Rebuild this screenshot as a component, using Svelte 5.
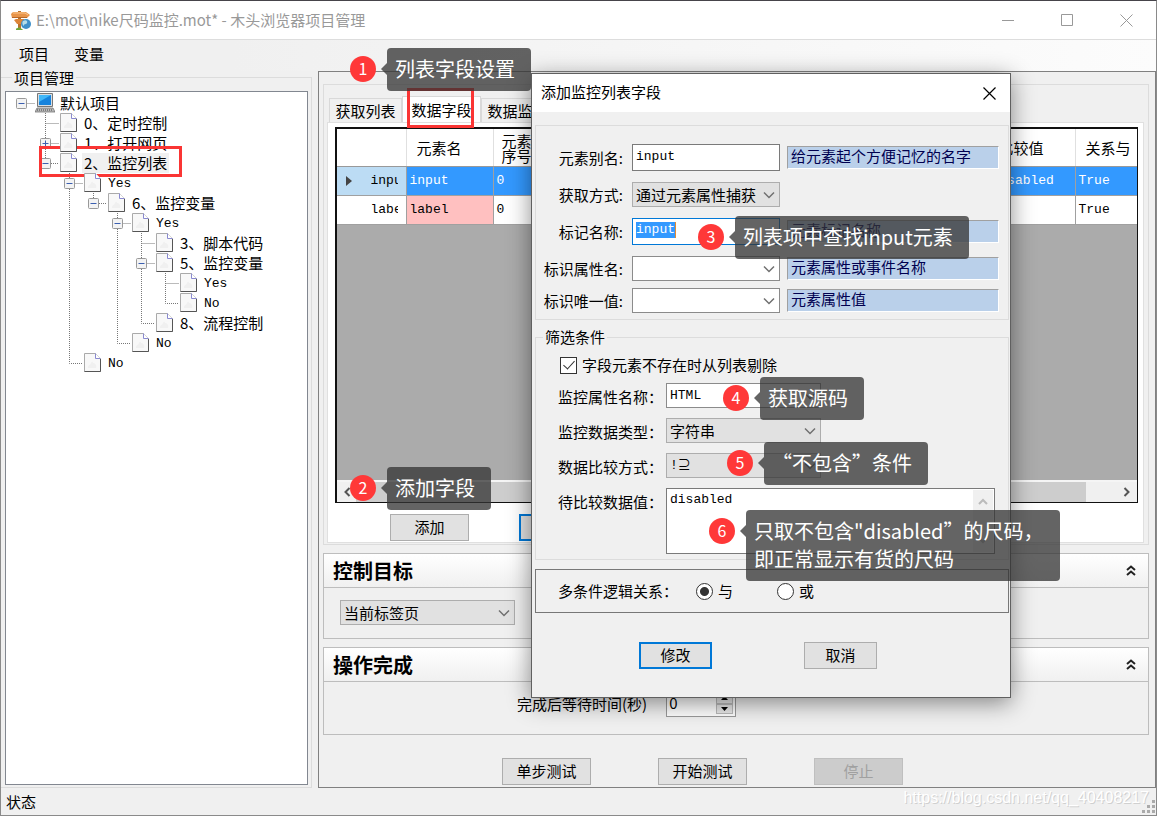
<script>
    // Guide cells: "" blank, "v" line, "t" branch, "l" last branch, "r" root
    const tree = [
        { text: "默认项目", guides: ["r"], toggle: "-", root: true },
        { text: "0、定时控制", guides: ["", "t"] },
        { text: "1、打开网页", guides: ["", "t"], toggle: "+" },
        { text: "2、监控列表", guides: ["", "l"], toggle: "-", selected: true },
        { text: "Yes", guides: ["", "", "t"], toggle: "-" },
        { text: "6、监控变量", guides: ["", "", "v", "l"], toggle: "-" },
        { text: "Yes", guides: ["", "", "v", "", "t"], toggle: "-" },
        { text: "3、脚本代码", guides: ["", "", "v", "", "v", "t"] },
        { text: "5、监控变量", guides: ["", "", "v", "", "v", "t"], toggle: "-" },
        { text: "Yes", guides: ["", "", "v", "", "v", "v", "t"] },
        { text: "No", guides: ["", "", "v", "", "v", "v", "l"] },
        { text: "8、流程控制", guides: ["", "", "v", "", "v", "l"] },
        { text: "No", guides: ["", "", "v", "", "l"] },
        { text: "No", guides: ["", "", "l"] },
    ];

    const guidePaths = {
        v: "M12.5 0V20",
        t: "M12.5 0V20M12.5 10.5H26",
        l: "M12.5 0V10.5H26",
        r: "M12.5 10.5H26",
    };

    const tabs = ["获取列表", "数据字段", "数据监控"];
    let activeTab = $state(1);

    const notes = [
        { id: 1, x: 350, y: 48, lines: ["列表字段设置"] },
        { id: 2, x: 350, y: 467, lines: ["添加字段"] },
        { id: 3, x: 698, y: 216, lines: ["列表项中查找input元素"] },
        { id: 4, x: 723, y: 377, lines: ["获取源码"] },
        { id: 5, x: 727, y: 442, lines: ["“不包含”条件"] },
        { id: 6, x: 709, y: 510, lines: ['只取不包含"disabled”的尺码，', "即正常显示有货的尺码"] },
    ];

    let alias = $state("input");
    let tagName = $state("input");
    let removeMissing = $state(true);
    let compareValue = $state("disabled");
    let logic = $state("and");
    let waitSeconds = $state("0");
</script>

{#snippet combo(id, value, kind)}
    <span class="combo {kind}">
        <select {id} aria-label={id}>
            <option>{value}</option>
        </select>
        <svg width="12" height="8" viewBox="0 0 12 8"><path d="M1 1.5l5 5 5-5" fill="none" stroke="#707070" stroke-width="1.5" /></svg>
    </span>
{/snippet}

{#snippet collapseIcon()}
    <svg width="10" height="11" viewBox="0 0 10 11"><path d="M1 5l4-3.5L9 5M1 10l4-3.5L9 10" fill="none" stroke="#222" stroke-width="2" /></svg>
{/snippet}

<div class="window">
    <header class="titlebar">
        <svg class="logo" width="20" height="21" viewBox="0 0 20 21">
            <path d="M7 1h3v18H7z" fill="#b8722b" />
            <path d="M0 4l2-2h13l4 3-3 3H1z" fill="#e8954a" />
            <path d="M2 3h12l3 2" fill="none" stroke="#fbc68d" />
            <path d="M1 7.500h15" stroke="#b5682a" />
            <path d="M3 10l2-1h8v5H6z" fill="#dd8438" />
            <path d="M5 20c0-3 2-1 3-3 1 2 3 1 4 3z" fill="#6fa537" />
            <circle cx="15" cy="14" r="5" fill="#3e8fc9" />
            <path d="M12 11c3-2 5 0 4 2s-3 0-3 3c-2-1-2-4-1-5z" fill="#b5dce9" />
        </svg>
        <h1>E:\mot\nike尺码监控.mot* - 木头浏览器项目管理</h1>
        <div class="window-buttons">
            <button aria-label="最小化"><svg width="13" height="13"><path d="M0 6.500H12" stroke="#999" /></svg></button>
            <button aria-label="最大化"><svg width="13" height="13"><path d="M.5 .5h11v11H.5z" fill="none" stroke="#999" /></svg></button>
            <button aria-label="关闭"><svg width="13" height="13"><path d="M.5 .5l12 12M12.500 .5l-12 12" stroke="#999" /></svg></button>
        </div>
    </header>

    <nav class="menubar">
        <button>项目</button>
        <button>变量</button>
    </nav>

    <main class="workspace">
        <fieldset class="project-box">
            <legend>项目管理</legend>
            <div class="tree">
                {#each tree as node}
                    <div class="node">
                        {#each node.guides as guide, i}
                            <svg class="guide" width="24" height="20" viewBox="0 0 24 20">
                                {#if guide}
                                    <path d={guidePaths[guide]} fill="none" stroke="#777" stroke-dasharray="1 1" />
                                {/if}
                                {#if node.toggle && i === node.guides.length - 1}
                                    <rect x="7.5" y="5.5" width="10" height="10" rx="1" fill="#f3f3f3" stroke="#999" />
                                    <path d={node.toggle === "+" ? "M9.500 10.500h6M12.500 7.500v6" : "M9.500 10.500h6"} stroke="#3b5fb0" />
                                {/if}
                            </svg>
                        {/each}
                        {#if node.root}
                            <svg class="pc" width="20" height="20" viewBox="0 0 20 20">
                                <path d="M2.500 .5h15v13h-15z" fill="#d8dde2" stroke="#777" />
                                <path d="M4 2h12v10H4z" fill="#1683dd" />
                                <path d="M4 2h12L4 9z" fill="#41b7f8" />
                                <path d="M2 15h16l2 4H0z" fill="#bbb" stroke="#666" stroke-width=".7" />
                                <path d="M2 17h16" stroke="#444" stroke-dasharray="1 1" />
                            </svg>
                        {:else}
                            <svg class="page" width="18" height="20" viewBox="0 0 18 20">
                                <path d="M.5 .5h11l5 5v13H.5z" fill="#f8f8f8" stroke="#aaa" />
                                <path d="M.5 18.500h16V6" fill="none" stroke="#555" />
                                <path d="M11.500 .5v5h5" fill="#fff" stroke="#8a8ad0" />
                                <path d="M4 15c0-4 2-2 3-5 1-2 2-1 2 0 2 0 4 2 3 5z" fill="#f0f0f0" />
                            </svg>
                        {/if}
                        <span class="node-text" class:latin={/^[A-Z]/.test(node.text)} class:selected={node.selected}>{node.text}</span>
                    </div>
                {/each}
            </div>
        </fieldset>

        <section class="detail">
            <div class="tab-group">
                <div class="tabs" role="tablist">
                    {#each tabs as tab, i}
                        <button role="tab" aria-selected={activeTab === i} class:active={activeTab === i} onclick={() => (activeTab = i)}>{tab}</button>
                    {/each}
                </div>
                <div class="tab-page">
                    <div class="grid">
                        <div class="grid-body">
                            <table>
                                <colgroup>
                                    <col class="c-head" /><col class="c-mid" /><col /><col class="c-mid" /><col class="c-last" />
                                </colgroup>
                                <thead>
                                    <tr><th></th><th>元素名</th><th class="two">元素<br />序号</th><th>比较值</th><th>关系与</th></tr>
                                </thead>
                                <tbody>
                                    <tr class="current">
                                        <td><div class="row-head"><svg width="8" height="12"><path d="M1 1l6 5-6 5z" fill="#444" /></svg><span>input</span></div></td>
                                        <td>input</td><td>0</td><td>disabled</td><td>True</td>
                                    </tr>
                                    <tr>
                                        <td><div class="row-head"><span>label</span></div></td>
                                        <td class="pink">label</td><td>0</td><td></td><td>True</td>
                                    </tr>
                                </tbody>
                            </table>
                        </div>
                        <div class="scrollbar">
                            <svg width="8" height="10"><path d="M6.500 1l-4 4 4 4" fill="none" stroke="#555" stroke-width="2" /></svg>
                            <div class="thumb"></div>
                            <svg width="8" height="10"><path d="M1.500 1l4 4-4 4" fill="none" stroke="#555" stroke-width="2" /></svg>
                        </div>
                    </div>
                    <div class="grid-actions">
                        <button class="btn">添加</button>
                        <button class="btn primary">修改</button>
                    </div>
                </div>
            </div>

            <section class="panel">
                <h2>控制目标 {@render collapseIcon()}</h2>
                <div class="panel-body target">{@render combo("target", "当前标签页", "flat")}</div>
            </section>

            <section class="panel">
                <h2>操作完成 {@render collapseIcon()}</h2>
                <div class="panel-body wait">
                    <label for="wait">完成后等待时间(秒)</label>
                    <div class="spinner">
                        <input id="wait" type="text" bind:value={waitSeconds} />
                        <div class="spin-buttons">
                            <button aria-label="增加"><svg width="7" height="4"><path d="M0 4h7L3.500 0z" /></svg></button>
                            <button aria-label="减少"><svg width="7" height="4"><path d="M0 0h7L3.500 4z" /></svg></button>
                        </div>
                    </div>
                </div>
            </section>

            <div class="test-actions">
                <button class="btn">单步测试</button>
                <button class="btn">开始测试</button>
                <button class="btn" disabled>停止</button>
            </div>
        </section>
    </main>

    <footer class="status">
        <span>状态</span>
        <span class="watermark">https://blog.csdn.net/qq_40408217</span>
        <svg class="grip" width="13" height="13" fill="#aaa">
            <path d="M10 0h3v3h-3zM5 5h3v3H5zM10 5h3v3h-3zM0 10h3v3H0zM5 10h3v3H5zM10 10h3v3h-3z" />
        </svg>
    </footer>

    <div class="dialog" role="dialog" aria-labelledby="dialog-title">
        <header>
            <h2 id="dialog-title">添加监控列表字段</h2>
            <button aria-label="关闭"><svg width="13" height="13"><path d="M.5 .5l12 12M12.500 .5l-12 12" stroke="#000" stroke-width="1.2" /></svg></button>
        </header>

        <div class="box element-box">
            <div class="field">
                <label for="alias">元素别名:</label>
                <input id="alias" class="text" type="text" bind:value={alias} />
                <span class="hint">给元素起个方便记忆的名字</span>
            </div>
            <div class="field">
                <label for="method">获取方式:</label>
                {@render combo("method", "通过元素属性捕获", "flat")}
            </div>
            <div class="field">
                <label for="tag">标记名称:</label>
                <div class="text focused">
                    <input id="tag" type="text" size="5" bind:value={tagName} />
                </div>
                <span class="hint">元素标记名称</span>
            </div>
            <div class="field tight">
                <label for="attr">标识属性名:</label>
                {@render combo("attr", "", "")}
                <span class="hint">元素属性或事件名称</span>
            </div>
            <div class="field">
                <label for="unique">标识唯一值:</label>
                {@render combo("unique", "", "")}
                <span class="hint">元素属性值</span>
            </div>
        </div>

        <fieldset class="box filter-box">
            <legend>筛选条件</legend>
            <label class="check"><input type="checkbox" bind:checked={removeMissing} />字段元素不存在时从列表剔除</label>
            <div class="filter">
                <label for="watch-attr">监控属性名称：</label>
                {@render combo("watch-attr", "HTML", "latin")}
            </div>
            <div class="filter">
                <label for="watch-type">监控数据类型：</label>
                {@render combo("watch-type", "字符串", "flat")}
            </div>
            <div class="filter">
                <label for="compare">数据比较方式：</label>
                {@render combo("compare", "!⊇", "flat latin")}
            </div>
            <div class="filter">
                <label for="value">待比较数据值：</label>
                <div class="area">
                    <textarea id="value" bind:value={compareValue}></textarea>
                    <div class="area-scroll">
                        <svg width="10" height="7"><path d="M1 6l4-4 4 4" fill="none" stroke="#bbb" stroke-width="2" /></svg>
                        <svg width="10" height="7"><path d="M1 1l4 4 4-4" fill="none" stroke="#bbb" stroke-width="2" /></svg>
                    </div>
                </div>
            </div>
        </fieldset>

        <div class="box logic-box">
            <span>多条件逻辑关系：</span>
            <label><input type="radio" name="logic" value="and" bind:group={logic} />与</label>
            <label><input type="radio" name="logic" value="or" bind:group={logic} />或</label>
        </div>

        <div class="dialog-actions">
            <button class="btn primary">修改</button>
            <button class="btn">取消</button>
        </div>
    </div>

    <div class="marker marker-node"></div>
    <div class="marker marker-tab"></div>
    {#each notes as note}
        <div class="note" style="left: {note.x}px; top: {note.y}px">
            <span class="number">{note.id}</span>
            <p>
                {#each note.lines as line}
                    <span>{line}</span>
                {/each}
            </p>
        </div>
    {/each}
</div>

<style>
    :global(body) {
        margin: 0;
    }

    .window {
        position: relative;
        display: flex;
        flex-direction: column;
        min-height: 100vh;
        box-sizing: border-box;
        border: 1px solid #8a8a8a;
        border-top-color: #46444a;
        background: #f0f0f0;
        color: #000;
        font-family: "Noto Sans CJK SC", sans-serif;
        font-size: 15px;
        line-height: 20px;
    }

    .window :is(button, input, select, textarea) {
        box-sizing: border-box;
        margin: 0;
        padding: 0;
        border: 0;
        border-radius: 0;
        background: none;
        color: inherit;
        font: inherit;
        outline: none;
    }

    h1, h2, p {
        margin: 0;
        font-weight: normal;
    }

    svg {
        flex: none;
    }

    .latin,
    td,
    .window .text,
    .window textarea {
        font-family: "Liberation Mono", "Noto Sans CJK SC", monospace;
        font-size: 13px;
    }

    /* Title bar and menu */
    .titlebar {
        display: flex;
        align-items: center;
        height: 38px;
        padding-left: 10px;
        background: #fff;
        border-bottom: 1px solid #ddd;
        color: #999;
    }

    .titlebar h1 {
        flex: 1;
        margin-left: 5px;
        font-size: 15px;
    }

    .window-buttons {
        display: flex;
    }

    .window-buttons button {
        display: flex;
        align-items: center;
        justify-content: center;
        width: 59px;
        height: 38px;
    }

    .menubar {
        display: flex;
        align-items: flex-start;
        gap: 25px;
        height: 27px;
        padding: 4px 0 0 18px;
        background: linear-gradient(to right, #f0f0f0 20%, #fcfcfc);
    }

    .workspace {
        display: flex;
        flex: 1;
    }

    fieldset {
        margin: 0;
        padding: 0;
        min-width: 0;
    }

    /* Project tree */
    .project-box {
        display: flex;
        flex-direction: column;
        width: 311px;
        box-sizing: border-box;
        border: 1px solid #dcdcdc;
        border-left: 0;
        padding: 7px 3px 2px 4px;
    }

    .project-box legend {
        margin-left: 7px;
        padding: 0 2px;
        line-height: 13px;
    }

    .tree {
        height: 100%;
        box-sizing: border-box;
        padding: 1px 0 0 3px;
        border: 1px solid #828790;
        background: #fff;
    }

    .node {
        display: flex;
        align-items: center;
        height: 20px;
    }

    .guide {
        overflow: visible;
    }

    .page {
        margin: 0 4px 0 3px;
        z-index: 1;
    }

    .pc {
        margin: 0 3px 0 2px;
    }

    .node-text {
        padding: 0 2px;
        white-space: nowrap;
    }

    .node-text.latin {
        padding-top: 2px;
    }

    .node-text.selected {
        background: #f0f0f0;
    }

    /* Right side */
    .detail {
        display: flex;
        flex: 1;
        flex-direction: column;
        min-width: 0;
        margin-left: 6px;
        padding: 12px 6px 2px 4px;
        border: 1px solid #808080;
    }

    .tab-group {
        display: flex;
        flex: 1;
        flex-direction: column;
        padding: 12px 4px 1px 3px;
        border: 1px solid #dcdcdc;
    }

    .tabs {
        display: flex;
        align-items: flex-end;
        height: 25px;
        padding-left: 2px;
    }

    .tabs button {
        width: 73px;
        height: 24px;
        border: 1px solid #d9d9d9;
        border-bottom: 0;
        white-space: nowrap;
    }

    .tabs button.active {
        width: 79px;
        height: 26px;
        background: #fff;
    }

    .tab-page {
        display: flex;
        flex: 1;
        flex-direction: column;
        padding: 4px 5px 1px 7px;
        border: 1px solid #e0e0e0;
        background: #fff;
    }

    .grid {
        display: flex;
        flex: 1;
        flex-direction: column;
        border: 2px solid #111;
        border-width: 2px 1px 1px 2px;
        background: #ababab;
    }

    .grid-body {
        flex: 1;
    }

    table {
        width: 100%;
        border-collapse: collapse;
        table-layout: fixed;
        background: #fff;
    }

    .c-head {
        width: 69px;
    }

    .c-mid {
        width: 87px;
    }

    .c-last {
        width: 62px;
    }

    th {
        height: 37px;
        padding: 0 0 0 10px;
        border-right: 1px solid #e0e0e0;
        border-bottom: 1px solid #999;
        font-weight: normal;
        text-align: left;
        white-space: nowrap;
    }

    .two {
        padding-left: 8px;
        line-height: 15px;
    }

    td {
        height: 28px;
        padding: 0 0 0 3px;
        border-right: 1px solid #a0a0a0;
        border-bottom: 1px solid #a0a0a0;
    }

    th:last-child,
    td:last-child {
        border-right: 0;
    }

    .current td {
        background: #3399ff;
        color: #fff;
    }

    .current td:first-child {
        background: #bcdcf4;
        color: #000;
    }

    .pink {
        background: #ffc0c0;
    }

    .row-head {
        display: flex;
        align-items: center;
        justify-content: flex-end;
        gap: 18px;
        padding-right: 8px;
    }

    .row-head span {
        width: 27px;
        overflow: hidden;
    }

    .scrollbar {
        display: flex;
        align-items: center;
        height: 20px;
        padding: 0 6px;
        border-top: 2px solid #f5f5f5;
        background: #f0f0f0;
    }

    .thumb {
        flex: 1;
        height: 20px;
        margin: 0 37px 0 5px;
        background: #cdcdcd;
    }

    .grid-actions {
        display: flex;
        gap: 50px;
        padding: 11px 0 0 55px;
    }

    .btn {
        width: 79px;
        height: 27px;
    }

    .window .btn {
        padding-bottom: 1px;
        border: 1px solid #adadad;
        background: #e1e1e1;
    }

    .window .btn.primary {
        border: 2px solid #0078d7;
    }

    .window .btn:disabled {
        border-color: #bfbfbf;
        background: #ccc;
        color: #a0a0a0;
    }

    .panel {
        margin-top: 8px;
        border: 1px solid #bdbdbd;
    }

    .panel h2 {
        display: flex;
        align-items: center;
        justify-content: space-between;
        height: 33px;
        padding: 0 12px 0 9px;
        border-bottom: 1px solid #bdbdbd;
        background: linear-gradient(#fff, #f0f0f0);
        font-size: 20px;
        font-weight: bold;
    }

    .target {
        padding: 12px 16px 13px;
    }

    .target .combo {
        width: 175px;
    }

    .wait {
        display: flex;
        gap: 19px;
        padding: 8px 0 17px 193px;
    }

    .wait label {
        padding-top: 4px;
    }

    .spinner {
        display: flex;
        width: 70px;
        height: 27px;
        box-sizing: border-box;
        border: 1px solid #999;
        background: #fff;
    }

    .spinner input {
        flex: 1;
        min-width: 0;
        padding: 0 2px;
        height: 23px;
    }

    .spin-buttons {
        display: flex;
        flex-direction: column;
        padding: 2px;
    }

    .spin-buttons button {
        display: flex;
        align-items: center;
        justify-content: center;
        width: 17px;
        flex: 1;
        border: 1px solid #bbb;
        background: #e8e8e8;
    }

    .test-actions {
        display: flex;
        gap: 67px;
        padding: 23px 0 0 179px;
    }

    .test-actions .btn {
        width: 89px;
    }

    .status {
        display: flex;
        align-items: center;
        height: 27px;
        padding: 0 1px 0 5px;
    }

    .watermark {
        margin-left: auto;
        align-self: flex-start;
        color: #fff;
        text-shadow: 1px 1px 0 #d0d0d0;
        font-family: "Liberation Sans", sans-serif;
        font-size: 16px;
    }

    .grip {
        align-self: flex-end;
        margin: 0 0 2px -7px;
    }

    /* Form controls */
    .combo {
        display: grid;
        align-items: center;
        width: 148px;
        height: 25px;
        box-sizing: border-box;
        border: 1px solid #8b8b8b;
        background: #fff;
    }

    .combo select {
        grid-area: 1 / 1;
        width: 100%;
        height: 23px;
        appearance: none;
        padding: 0 20px 0 3px;
    }

    .combo svg {
        grid-area: 1 / 1;
        justify-self: end;
        margin-right: 4px;
        pointer-events: none;
    }

    .combo.flat {
        border-color: #adadad;
        background: #e1e1e1;
    }

    .text {
        width: 148px;
        height: 27px;
    }

    .window .text {
        box-sizing: border-box;
        border: 1px solid #7a7a7a;
        padding: 0 0 3px 3px;
        background: #fff;
    }

    .window .text.focused {
        padding: 3px;
        border: 1px solid #0078d7;
    }

    .focused input {
        display: block;
        width: 40px;
        height: 16px;
    }

    .window .focused input {
        border-right: 1px solid #e58c32;
        background: #3399ff;
        color: #fff;
    }

    .dialog {
        position: absolute;
        left: 530px;
        top: 72px;
        width: 480px;
        box-sizing: border-box;
        padding-bottom: 28px;
        border: 1px solid #606060;
        background: #f0f0f0;
        box-shadow: 0 5px 22px rgba(0, 0, 0, 0.45);
    }

    .dialog header {
        display: flex;
        align-items: center;
        justify-content: space-between;
        height: 38px;
        padding: 0 14px 0 9px;
        background: #fff;
    }

    .dialog header h2 {
        padding-bottom: 2px;
        font-size: 15px;
    }

    .dialog header button {
        display: flex;
    }

    .box {
        margin: 0 1px 0 3px;
        border: 1px solid #dcdcdc;
    }

    .element-box {
        margin-top: 13px;
        padding: 18px 0 6px;
    }

    .field {
        display: flex;
        align-items: center;
        height: 27px;
        margin-bottom: 10px;
    }

    .field.tight {
        margin-bottom: 6px;
    }

    .field:last-child {
        height: 25px;
        margin-bottom: 0;
    }

    .field label {
        width: 87px;
        margin-right: 9px;
        text-align: right;
    }

    .hint {
        width: 212px;
        height: 23px;
        box-sizing: border-box;
        margin-left: 7px;
        padding-left: 3px;
        border: 1px solid #fff;
        border-top-color: #a0a0a0;
        border-left-color: #a0a0a0;
        background: #bad0ea;
        color: #000050;
        line-height: 17px;
    }

    .filter-box {
        margin-top: 10px;
        padding: 9px 0 5px;
    }

    .filter-box legend {
        margin-left: 7px;
        padding: 0 2px;
        line-height: 14px;
    }

    .check {
        display: flex;
        align-items: center;
        margin: 2px 0 8px 24px;
    }

    .window .check input {
        appearance: none;
        width: 17px;
        height: 17px;
        margin-right: 5px;
        border: 1px solid #333;
        background: #fff;
    }

    .check input:checked::before {
        content: "";
        display: block;
        width: 5px;
        height: 10px;
        margin: 0 auto;
        border: solid #333;
        border-width: 0 1px 1px 0;
        rotate: 42deg;
    }

    .filter {
        display: flex;
        margin-bottom: 10px;
    }

    .filter:last-child {
        margin-bottom: 0;
    }

    .filter label {
        width: 108px;
        margin-left: 22px;
        padding-top: 4px;
    }

    .filter .combo {
        width: 155px;
    }

    .area {
        display: flex;
        width: 329px;
        height: 66px;
        box-sizing: border-box;
        border: 1px solid #7a7a7a;
        background: #fff;
    }

    .window .area textarea {
        flex: 1;
        padding: 1px 3px;
        resize: none;
    }

    .area-scroll {
        display: flex;
        flex-direction: column;
        align-items: center;
        justify-content: space-between;
        width: 20px;
        margin: 1px;
        padding: 8px 0;
        box-sizing: border-box;
        background: #f0f0f0;
    }

    .logic-box {
        display: flex;
        align-items: center;
        height: 42px;
        margin-top: 9px;
        padding-left: 22px;
        border-color: #777;
    }

    .logic-box span {
        width: 138px;
    }

    .logic-box label {
        display: flex;
        align-items: center;
        gap: 5px;
        width: 81px;
    }

    .window .logic-box input {
        appearance: none;
        width: 17px;
        height: 17px;
        border: 1px solid #333;
        border-radius: 50%;
        background: #fff;
    }

    .window .logic-box input:checked {
        background: radial-gradient(circle, #333 0 4px, #fff 5px);
    }

    .dialog-actions {
        display: flex;
        gap: 92px;
        padding: 29px 0 0 107px;
    }

    .dialog-actions .btn {
        width: 73px;
    }

    /* Annotations lying over the window */
    .marker {
        position: absolute;
        box-sizing: border-box;
        border: 3px solid #fa3534;
    }

    .marker-node {
        left: 38px;
        top: 145px;
        width: 143px;
        height: 31px;
    }

    .marker-tab {
        left: 406px;
        top: 87px;
        width: 67px;
        height: 40px;
    }

    .note {
        position: absolute;
        display: flex;
        align-items: flex-start;
        margin: -1px 0 0 -1px;
        font-size: 20px;
        line-height: 28px;
    }

    .number {
        width: 26px;
        height: 26px;
        margin: 8px 11px 0 0;
        border-radius: 50%;
        background: #ff3838;
        color: #fff;
        font-size: 16px;
        line-height: 25px;
        text-align: center;
    }

    .note p {
        padding: 7px 16px 8px 8px;
        border-radius: 4px;
        background: rgba(51, 51, 51, 0.76);
        color: #fff;
        white-space: nowrap;
    }

    .note p span {
        display: block;
    }

    .note p::before {
        content: "";
        float: left;
        margin: 8px 0 0 -14px;
        border: 6px solid transparent;
        border-left: 0;
        border-right-color: rgba(51, 51, 51, 0.76);
    }
</style>
